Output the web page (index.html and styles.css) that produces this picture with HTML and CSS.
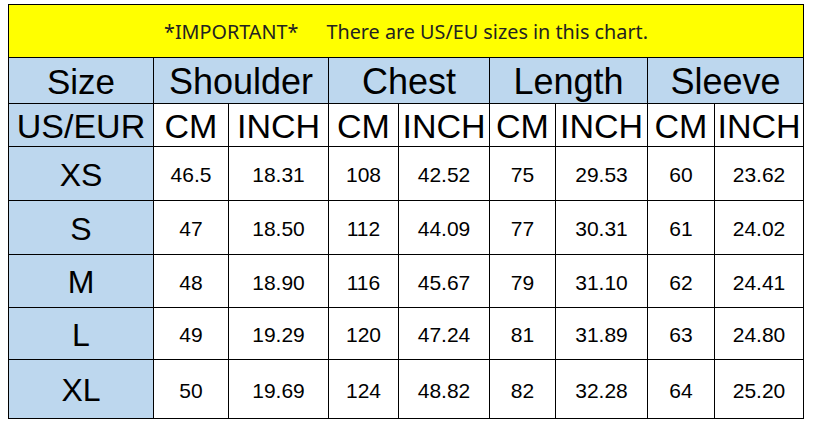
FILE: index.html
```html
<!DOCTYPE html>
<html>
<head>
<meta charset="utf-8">
<link rel="stylesheet" href="styles.css">
</head>
<body>
<table class="chart">
  <colgroup>
    <col class="c-size"><col class="c-a"><col class="c-b"><col class="c-c"><col class="c-d"><col class="c-e"><col class="c-f"><col class="c-g"><col class="c-h">
  </colgroup>
  <tr class="r-note">
    <td colspan="9" class="note"><span>*IMPORTANT*</span><span class="note-gap"></span><span>There are US/EU sizes in this chart.</span></td>
  </tr>
  <tr class="r-head">
    <td class="blue head big-size">Size</td>
    <td colspan="2" class="blue head">Shoulder</td>
    <td colspan="2" class="blue head">Chest</td>
    <td colspan="2" class="blue head">Length</td>
    <td colspan="2" class="blue head">Sleeve</td>
  </tr>
  <tr class="r-unit">
    <td class="blue unit">US/EUR</td>
    <td class="unit">CM</td><td class="unit">INCH</td>
    <td class="unit">CM</td><td class="unit">INCH</td>
    <td class="unit">CM</td><td class="unit">INCH</td>
    <td class="unit">CM</td><td class="unit">INCH</td>
  </tr>
  <tr class="r-1">
    <td class="blue sz">XS</td>
    <td>46.5</td><td>18.31</td><td>108</td><td>42.52</td><td>75</td><td>29.53</td><td>60</td><td>23.62</td>
  </tr>
  <tr class="r-2">
    <td class="blue sz">S</td>
    <td>47</td><td>18.50</td><td>112</td><td>44.09</td><td>77</td><td>30.31</td><td>61</td><td>24.02</td>
  </tr>
  <tr class="r-3">
    <td class="blue sz">M</td>
    <td>48</td><td>18.90</td><td>116</td><td>45.67</td><td>79</td><td>31.10</td><td>62</td><td>24.41</td>
  </tr>
  <tr class="r-4">
    <td class="blue sz">L</td>
    <td>49</td><td>19.29</td><td>120</td><td>47.24</td><td>81</td><td>31.89</td><td>63</td><td>24.80</td>
  </tr>
  <tr class="r-5">
    <td class="blue sz">XL</td>
    <td>50</td><td>19.69</td><td>124</td><td>48.82</td><td>82</td><td>32.28</td><td>64</td><td>25.20</td>
  </tr>
</table>
</body>
</html>
```

FILE: styles.css
```css
html, body {
  margin: 0;
  padding: 0;
  background: #ffffff;
}
body {
  padding: 4px 0 0 8px;
}
.chart {
  border-collapse: collapse;
  table-layout: fixed;
  width: 795px;
  font-family: "Liberation Sans", Arial, sans-serif;
  color: #000;
}
.c-size { width: 145px; }
.c-a { width: 75px; }
.c-b { width: 100px; }
.c-c { width: 70px; }
.c-d { width: 91px; }
.c-e { width: 66px; }
.c-f { width: 92px; }
.c-g { width: 67px; }
.c-h { width: 89px; }

.chart td {
  border: 1px solid #000;
  padding: 2px 0 0;
  text-align: center;
  vertical-align: middle;
  font-size: 21px;
  line-height: 1;
  white-space: nowrap;
  overflow: hidden;
}
.r-note td { height: 50px; }
.r-head td { height: 43px; }
.r-unit td { height: 40px; }
.r-1 td { height: 51px; }
.r-2 td { height: 51px; }
.r-3 td { height: 50px; }
.r-4 td { height: 49px; }
.r-5 td { height: 56px; }

.chart td.note {
  background: #ffff00;
  font-family: "Noto Sans", "Open Sans", sans-serif;
  font-size: 19.8px;
  color: #222;
}
.note-gap {
  display: inline-block;
  width: 28px;
}
.blue { background: #bdd7ee; }
.chart td.head {
  font-size: 36px;
}
.chart td.big-size { font-size: 35px; }
.chart td.unit {
  font-size: 34px;
}
.chart td.sz {
  font-size: 32px;
}
```
